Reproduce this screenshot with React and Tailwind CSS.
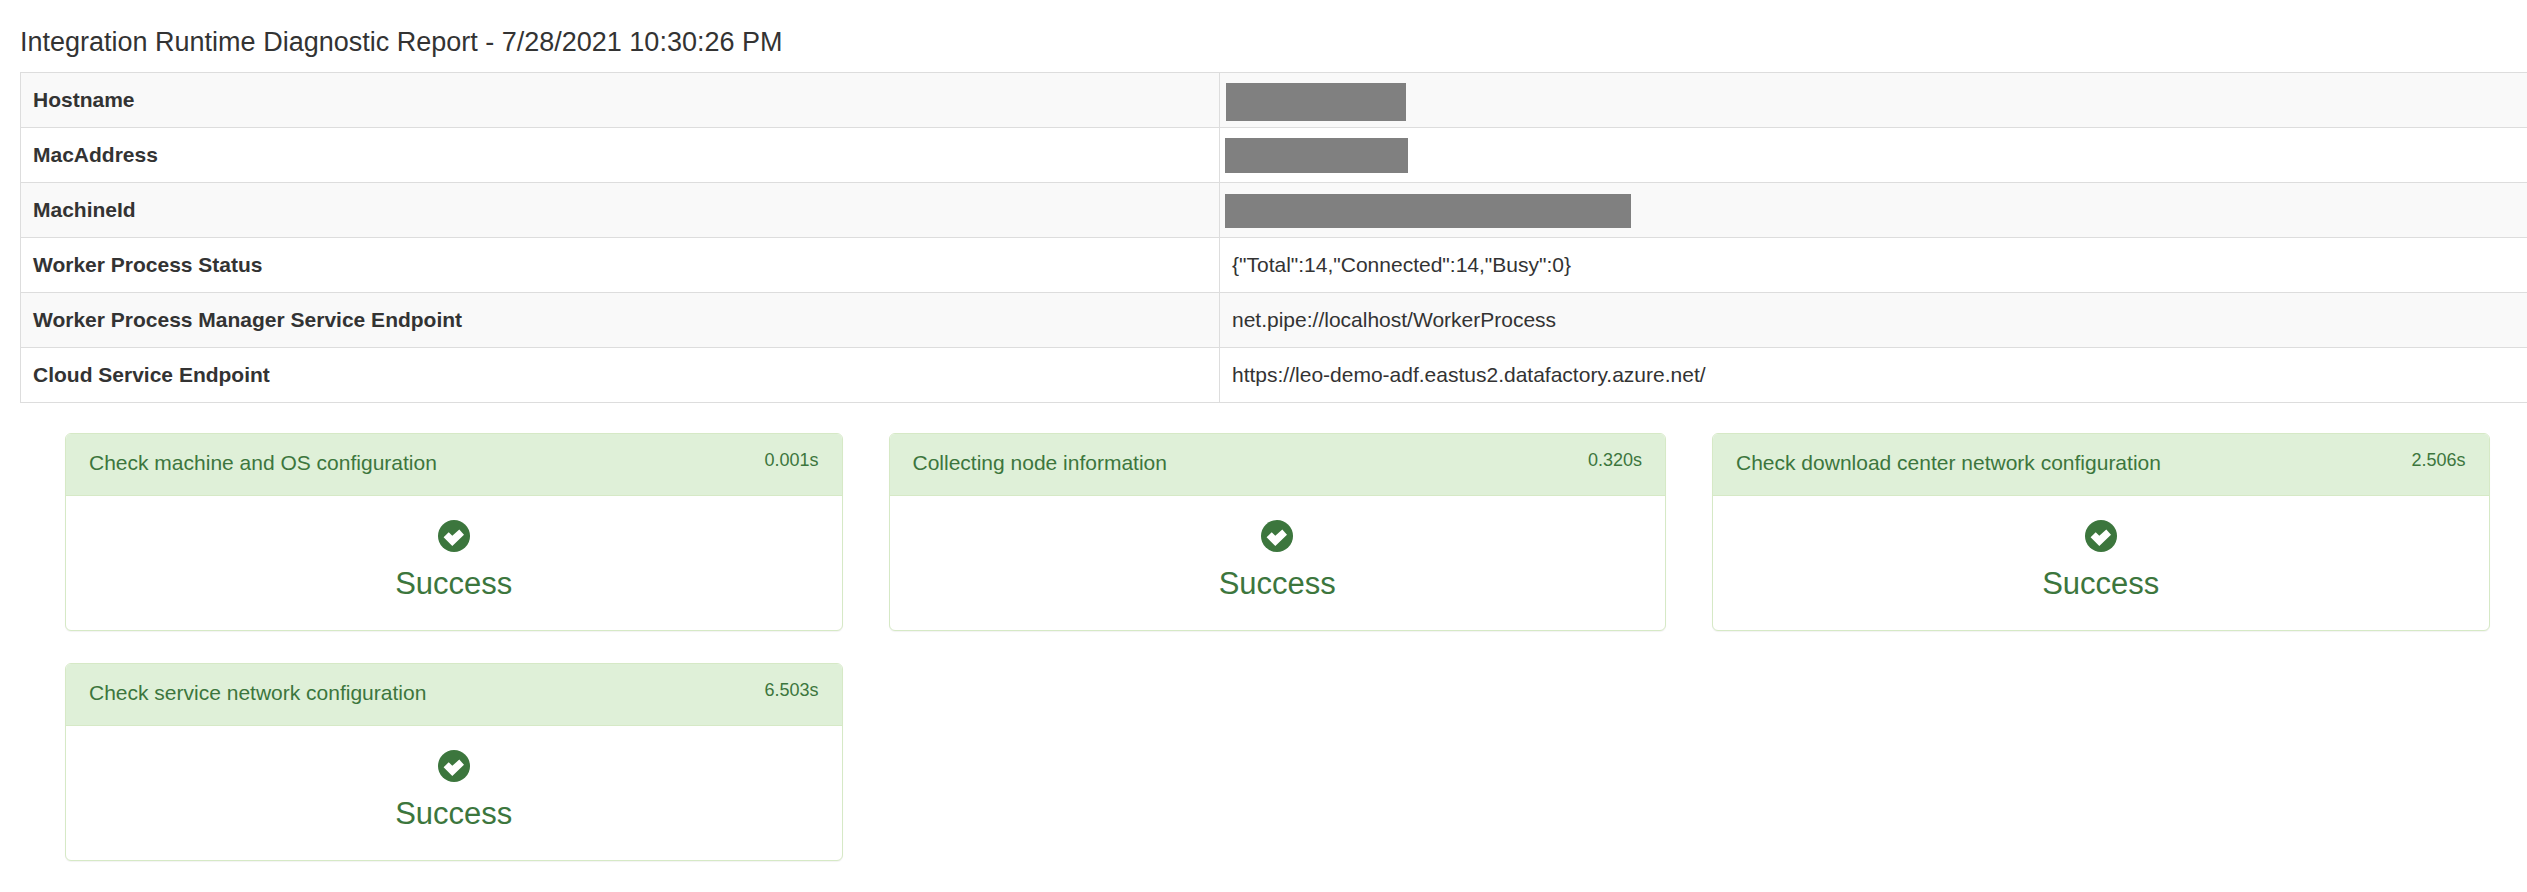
import React from 'react';

const rows = [
  { label: 'Hostname', redact: 'ml-[-6px] mt-[10px] w-[180px] h-[38px]' },
  { label: 'MacAddress', redact: 'ml-[-7px] mt-[10px] w-[183px] h-[35px]' },
  { label: 'MachineId', redact: 'ml-[-7px] mt-[11px] w-[406px] h-[34px]' },
  { label: 'Worker Process Status', value: '{"Total":14,"Connected":14,"Busy":0}' },
  { label: 'Worker Process Manager Service Endpoint', value: 'net.pipe://localhost/WorkerProcess' },
  { label: 'Cloud Service Endpoint', value: 'https://leo-demo-adf.eastus2.datafactory.azure.net/' },
];

const checks = [
  { name: 'Check machine and OS configuration', time: '0.001s' },
  { name: 'Collecting node information', time: '0.320s' },
  { name: 'Check download center network configuration', time: '2.506s' },
  { name: 'Check service network configuration', time: '6.503s' },
];

const CheckIcon = () => (
  <svg viewBox="0 0 32 32" className="w-8 h-8 block">
    <circle cx="16" cy="16" r="16" fill="#3c763d" />
    <path d="M5.6 17.3 L10.7 12.3 L14.3 15.8 L21.3 9.6 L26 14.8 L14.3 26 Z" fill="#ffffff" />
  </svg>
);

const CheckCard = ({ name, time }) => (
  <div className="h-[198px] bg-white border border-[#d6e9c6] rounded-[6px] overflow-hidden shadow-[0_1px_1px_rgba(0,0,0,0.05)]">
    <div className="h-[62px] bg-[#dff0d8] border-b border-[#d6e9c6] text-[#3c763d] px-[23px] flex justify-between">
      <span className="text-[21px] leading-[58px]">{name}</span>
      <span className="text-[18px] leading-[23px] pt-[15px]">{time}</span>
    </div>
    <div className="flex flex-col items-center pt-[24px] text-[#3c763d]">
      <CheckIcon />
      <div className="text-[31px] leading-[44px] mt-[10px]">Success</div>
    </div>
  </div>
);

const App = () => {
  return (
    <div className="h-[892px] overflow-hidden bg-white font-['Liberation_Sans',Arial,sans-serif] text-[#333333]">
      <h1 className="text-[27px] leading-[32px] pl-[20px] pt-[26px] pb-[14px] font-normal">
        Integration Runtime Diagnostic Report - 7/28/2021 10:30:26 PM
      </h1>
      <div className="ml-[20px] border-t border-l border-[#dddddd]">
        {rows.map((row, i) => (
          <div
            key={row.label}
            className={`flex h-[55px] border-b border-[#dddddd] ${i % 2 === 0 ? 'bg-[#f9f9f9]' : 'bg-white'}`}
          >
            <div className="w-[1199px] shrink-0 border-r border-[#dddddd] pl-[12px] flex items-center text-[21px] font-bold">
              {row.label}
            </div>
            {row.redact ? (
              <div className="flex-1 pl-[12px]">
                <div className={`bg-[#808080] ${row.redact}`} />
              </div>
            ) : (
              <div className="flex-1 flex items-center pl-[12px] text-[21px]">{row.value}</div>
            )}
          </div>
        ))}
      </div>
      <div className="grid grid-cols-[repeat(3,777.5px)] gap-x-[46px] gap-y-[32px] pl-[65px] pt-[30px]">
        {checks.map((c) => (
          <CheckCard key={c.name} name={c.name} time={c.time} />
        ))}
      </div>
    </div>
  );
};

export default App;
